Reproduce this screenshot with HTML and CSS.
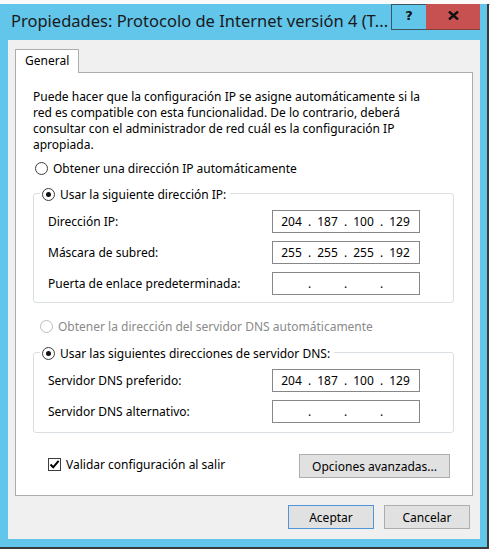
FILE: index.html
```html
<!DOCTYPE html>
<html lang="es">
<head>
<meta charset="utf-8">
<title>Propiedades: Protocolo de Internet versión 4 (TCP/IPv4)</title>
<link rel="stylesheet" href="styles.css">
</head>
<body>
<div class="backdrop"></div>
<div class="window">
  <div class="titlebar">
    <div class="title">Propiedades: Protocolo de Internet versión 4 (T...</div>
    <div class="caption-buttons">
      <div class="cap-btn help">?</div>
      <div class="cap-btn close">
        <svg width="11" height="9" viewBox="0 0 11 9"><path d="M1 0.5 L10 8.5 M10 0.5 L1 8.5" stroke="#111" stroke-width="2.4" fill="none"/></svg>
      </div>
    </div>
  </div>
  <div class="client">
    <div class="tabs"><div class="tab">General</div></div>
    <div class="panel">
      <p class="intro">Puede hacer que la configuración IP se asigne automáticamente si la<br>red es compatible con esta funcionalidad. De lo contrario, deberá<br>consultar con el administrador de red cuál es la configuración IP<br>apropiada.</p>

      <div class="option opt1"><span class="radio"></span><span>Obtener una dirección IP automáticamente</span></div>

      <div class="group g1">
        <div class="legend"><span class="radio on"></span><span>Usar la siguiente dirección IP:</span></div>
        <div class="row">
          <span class="label">Dirección IP:</span>
          <div class="ip"><span class="oct">204</span><span class="dot">.</span><span class="oct">187</span><span class="dot">.</span><span class="oct">100</span><span class="dot">.</span><span class="oct">129</span></div>
        </div>
        <div class="row">
          <span class="label">Máscara de subred:</span>
          <div class="ip"><span class="oct">255</span><span class="dot">.</span><span class="oct">255</span><span class="dot">.</span><span class="oct">255</span><span class="dot">.</span><span class="oct">192</span></div>
        </div>
        <div class="row">
          <span class="label">Puerta de enlace predeterminada:</span>
          <div class="ip"><span class="oct"></span><span class="dot">.</span><span class="oct"></span><span class="dot">.</span><span class="oct"></span><span class="dot">.</span><span class="oct"></span></div>
        </div>
      </div>

      <div class="option opt2 disabled"><span class="radio"></span><span>Obtener la dirección del servidor DNS automáticamente</span></div>

      <div class="group g2">
        <div class="legend"><span class="radio on"></span><span>Usar las siguientes direcciones de servidor DNS:</span></div>
        <div class="row">
          <span class="label">Servidor DNS preferido:</span>
          <div class="ip"><span class="oct">204</span><span class="dot">.</span><span class="oct">187</span><span class="dot">.</span><span class="oct">100</span><span class="dot">.</span><span class="oct">129</span></div>
        </div>
        <div class="row">
          <span class="label">Servidor DNS alternativo:</span>
          <div class="ip"><span class="oct"></span><span class="dot">.</span><span class="oct"></span><span class="dot">.</span><span class="oct"></span><span class="dot">.</span><span class="oct"></span></div>
        </div>
      </div>

      <div class="footer-row">
        <div class="check-row">
          <span class="checkbox"><svg width="11" height="11" viewBox="0 0 11 11"><path d="M1.5 5.5 L4.2 8.3 L9.6 1.8" stroke="#000" stroke-width="2" fill="none"/></svg></span>
          <span>Validar configuración al salir</span>
        </div>
        <button class="btn advanced">Opciones avanzadas...</button>
      </div>
    </div>
    <div class="actions">
      <button class="btn default">Aceptar</button>
      <button class="btn">Cancelar</button>
    </div>
  </div>
</div>
</body>
</html>
```

FILE: styles.css
```css
* { box-sizing: border-box; }

html, body {
  margin: 0;
  padding: 0;
  background: #ffffff;
}

body {
  font-family: "Noto Sans", "Open Sans", sans-serif;
  font-size: 12px;
  color: #000;
  width: 490px;
  height: 553px;
  overflow: hidden;
}

.backdrop {
  height: 5px;
  border-bottom: 1px solid #bdbdbd;
  background: #fafafa;
}

.window {
  width: 489px;
  height: 545px;
  background: #62c5ea;
  border-right: 2px solid #3a3a3a;
  border-bottom: 2px solid #3a3a3a;
  margin-top: -1px;
}

.titlebar {
  height: 36px;
  display: flex;
  align-items: flex-start;
  padding-left: 11px;
  padding-right: 7px;
}

.title {
  flex: 1;
  font-size: 16.5px;
  line-height: 22px;
  padding-top: 6px;
  color: #1a1a1a;
  white-space: nowrap;
  overflow: hidden;
}

.caption-buttons {
  display: flex;
}

.cap-btn {
  height: 26px;
  display: flex;
  align-items: center;
  justify-content: center;
}

.help {
  width: 35px;
  border: 1px solid #3d5560;
  border-right: none;
  font-weight: bold;
  font-size: 13px;
  font-family: "DejaVu Sans", sans-serif;
  padding-bottom: 3px;
  color: #111;
}

.close {
  width: 54px;
  background: #c75050;
  border-bottom: 1px solid #8c3a3a;
  padding-bottom: 2px;
}

.client {
  margin: 0 7px 0 8px;
  height: 499px;
  background: #f0f0f0;
  padding: 9px 7px 0 7px;
}

.tabs {
  display: flex;
}

.tab {
  position: relative;
  z-index: 1;
  height: 24px;
  margin-bottom: -1px;
  padding: 0 9px;
  width: 64px;
  line-height: 22px;
  background: #fff;
  border: 1px solid #adadad;
  border-bottom: none;
}

.panel {
  background: #fff;
  border: 1px solid #adadad;
  padding: 16px 18px 17px 17px;
}

.intro {
  margin: 0;
  line-height: 16px;
  white-space: nowrap;
}

.option, .legend, .check-row {
  display: flex;
  align-items: center;
  height: 18px;
  white-space: nowrap;
}

.radio {
  width: 13px;
  height: 13px;
  border: 1px solid #3c3c3c;
  border-radius: 50%;
  background: #fff;
  display: inline-grid;
  place-items: center;
  margin-right: 5px;
  flex: none;
}

.radio.on::after {
  content: "";
  width: 5px;
  height: 5px;
  border-radius: 50%;
  background: #111;
}

.opt1 {
  margin-top: 6px;
  padding-left: 2px;
}

.opt2 {
  margin-top: 14px;
  padding-left: 7px;
}

.disabled {
  color: #8a8a8a;
}

.disabled .radio {
  border-color: #bcbcbc;
}

.group {
  border: 1px solid #d9dfe3;
  border-radius: 3px;
  padding: 0 33px 7px 14px;
}

.g1 { margin-top: 16px; }
.g2 { margin-top: 17px; padding-bottom: 9px; }

.legend {
  align-self: flex-start;
  width: max-content;
  margin-top: -9px;
  margin-left: -8px;
  padding: 0 4px 0 2px;
  background: #fff;
}

.row {
  display: flex;
  align-items: center;
  justify-content: space-between;
  height: 23px;
  margin-top: 8px;
}

.legend + .row {
  margin-top: 7px;
}

.ip {
  width: 148px;
  height: 23px;
  border: 1px solid #878787;
  display: flex;
  align-items: center;
  padding-left: 6px;
  background: #fff;
}

.oct {
  width: 25px;
  text-align: center;
}

.dot {
  width: 11px;
  text-align: center;
}

.footer-row {
  display: flex;
  justify-content: space-between;
  align-items: flex-start;
  margin-top: 21px;
  padding-left: 15px;
  padding-right: 4px;
}

.check-row {
  margin-top: 1px;
}

.checkbox {
  width: 13px;
  height: 13px;
  border: 1px solid #3c3c3c;
  background: #fff;
  display: inline-grid;
  place-items: center;
  margin-right: 5px;
}

.checkbox svg { display: block; }

.btn {
  font-family: inherit;
  font-size: 12px;
  color: #000;
  height: 24px;
  background: #e1e1e1;
  border: 1px solid #adadad;
  padding: 0;
  margin: 0;
}

.advanced {
  width: 151px;
}

.actions {
  display: flex;
  justify-content: flex-end;
  gap: 10px;
  margin-top: 9px;
  padding-right: 3px;
}

.actions .btn {
  width: 86px;
}

.btn.default {
  border-color: #4f95d8;
}
```
